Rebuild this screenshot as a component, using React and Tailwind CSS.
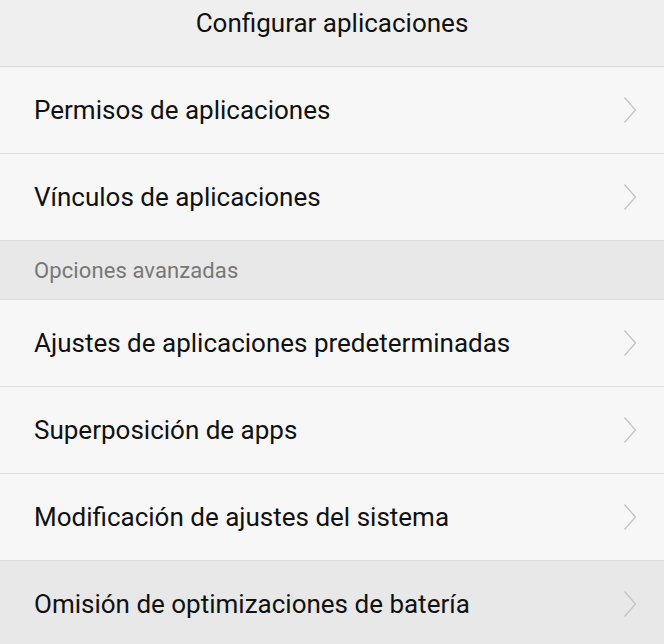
import React from 'react';

const Chevron = () => (
  <svg width="14" height="28" viewBox="0 0 14 28" fill="none" className="shrink-0">
    <path d="M1.5 1.5 L12.5 14 L1.5 26.5" stroke="#c4c4c4" strokeWidth="1.3" />
  </svg>
);

const Row = ({ label, pressed = false }) => (
  <div
    className={`flex items-center justify-between h-[87px] pl-[34px] pr-[27px] border-b border-[#dcdcdc] ${
      pressed ? 'bg-[#e8e8e8]' : 'bg-[#f7f7f7]'
    }`}
  >
    <span className="text-[26px] text-[#111]">{label}</span>
    <Chevron />
  </div>
);

const App = () => {
  return (
    <div className="w-[664px] h-[644px] overflow-hidden bg-[#f7f7f7]" style={{ fontFamily: 'Roboto, "Noto Sans", sans-serif' }}>
      <div className="h-[67px] bg-[#efefef] border-b border-[#d8d8d8] flex items-start justify-center pt-[4px]">
        <span className="text-[26px] text-[#111]">Configurar aplicaciones</span>
      </div>
      <Row label="Permisos de aplicaciones" />
      <Row label="Vínculos de aplicaciones" />
      <div className="h-[59px] bg-[#e8e8e8] border-b border-[#dcdcdc] flex items-center pl-[34px]">
        <span className="text-[22px] text-[#777] tracking-[0.1px]">Opciones avanzadas</span>
      </div>
      <Row label="Ajustes de aplicaciones predeterminadas" />
      <Row label="Superposición de apps" />
      <Row label="Modificación de ajustes del sistema" />
      <Row label="Omisión de optimizaciones de batería" pressed />
    </div>
  );
};

export default App;
